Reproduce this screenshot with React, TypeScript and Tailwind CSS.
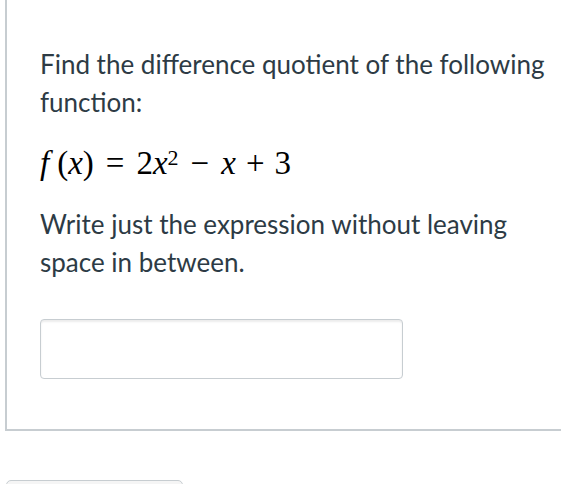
const App: React.FC = () => {
    return (
        <div className="w-[561px] h-[484px] overflow-hidden bg-white font-['Lato',sans-serif] text-[#2d3b45]">
            <div className="ml-[5px] w-[600px] border-l-2 border-b-2 border-[#c7cdd1] pl-[33px] pt-[45px] pb-[50px]">
                <p className="w-[515px] text-[26px] leading-[38px]">
                    Find the difference quotient of the following function:
                </p>

                {/* f(x) = 2x^2 - x + 3 */}
                <div className="mt-[24px] h-[38px] flex items-center font-['Liberation_Serif',serif] text-[33px] text-black whitespace-nowrap">
                    <span className="italic">f</span>
                    <span className="ml-[8px]">(</span>
                    <span className="italic">x</span>
                    <span>)</span>
                    <span className="mx-[12px]">=</span>
                    <span>2</span>
                    <span className="italic">x</span>
                    <sup className="text-[22px] relative -top-[6px]">2</sup>
                    <span className="mx-[12px]">−</span>
                    <span className="italic">x</span>
                    <span className="mx-[10px]">+</span>
                    <span>3</span>
                </div>

                <p className="mt-[22px] w-[515px] text-[26px] leading-[38px]">
                    Write just the expression without leaving space in between.
                </p>

                <input
                    type="text"
                    className="mt-[38px] block w-[363px] h-[60px] rounded-[4px] border border-[#c7cdd1] shadow-[inset_0_2px_2px_rgba(0,0,0,0.08)] outline-none"
                />
            </div>

            <div className="mt-[49px] ml-[6px] w-[177px] h-[40px] rounded-[5px] border border-[#c7cdd1] bg-[#f5f5f5]" />
        </div>
    );
};

export default App;
